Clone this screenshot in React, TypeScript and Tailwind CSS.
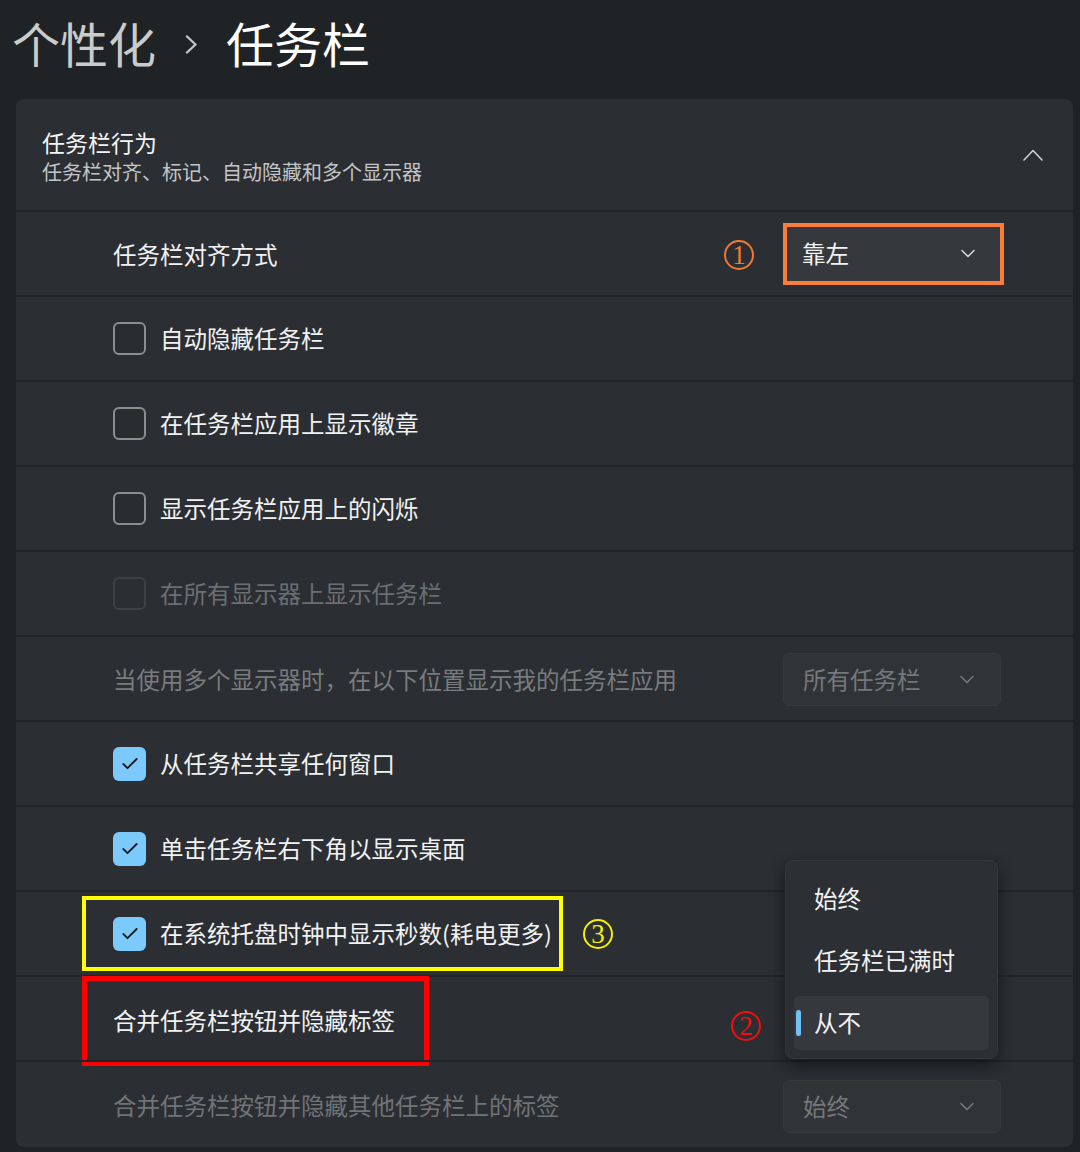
import { Check } from 'lucide-react'

type CheckState = 'off' | 'on' | 'disabled'

function Chevron({ className = '' }: { className?: string }) {
  return (
    <svg width="14" height="9" viewBox="0 0 14 9" className={className} fill="none">
      <polyline points="1,1.5 7,7.5 13,1.5" stroke="currentColor" strokeWidth="1.6" strokeLinecap="round" strokeLinejoin="round" />
    </svg>
  )
}

// circled annotation number, thin serif look
function Mark({ n, className }: { n: string; className: string }) {
  return (
    <span
      className={`flex h-[30px] w-[30px] shrink-0 items-center justify-center rounded-full border-2 border-current font-['Liberation_Serif',serif] text-[27px] leading-none ${className}`}
    >
      <span className="mt-[2px]">{n}</span>
    </span>
  )
}

function Checkbox({ state }: { state: CheckState }) {
  if (state === 'on') {
    return (
      <div className="flex h-[34px] w-[33px] shrink-0 items-center justify-center rounded-[6px] bg-[#7ccafc]">
        <Check className="h-[20px] w-[20px] text-[#16191c]" strokeWidth={2.2} />
      </div>
    )
  }
  return (
    <div
      className={
        state === 'disabled'
          ? 'h-[33px] w-[33px] shrink-0 rounded-[6px] border-2 border-[#3f4245]'
          : 'h-[33px] w-[33px] shrink-0 rounded-[6px] border-2 border-[#8b8d90] bg-[#2a2d30]'
      }
    />
  )
}

function Select({ value, dim }: { value: string; dim?: boolean }) {
  return (
    <div className="flex h-[53px] w-[218px] items-center justify-between rounded-[6px] border border-[#373a3d] bg-[#313437] pl-[19px] pr-[26px]">
      <span className={dim ? 'text-[#75787b]' : 'text-[#f2f2f2]'}>{value}</span>
      <Chevron className={dim ? 'text-[#75787b]' : 'text-[#d6d6d6]'} />
    </div>
  )
}

function Row({ children, last }: { children: React.ReactNode; last?: boolean }) {
  return (
    <div className={`relative flex items-center border-t-2 border-[#222528] pl-[97px] pr-[72px] ${last ? 'h-[87px]' : 'h-[85px]'}`}>
      {children}
    </div>
  )
}

function CheckRow({ label, state }: { label: string; state: CheckState }) {
  return (
    <Row>
      <div className="flex items-center gap-[14px]">
        <Checkbox state={state} />
        <span className={state === 'disabled' ? 'text-[#6c6f72]' : 'text-[#f2f2f2]'}>{label}</span>
      </div>
    </Row>
  )
}

export default function App() {
  return (
    <div className="h-[1152px] w-[1080px] overflow-hidden bg-[#202326] font-['Noto_Sans_CJK_SC','Microsoft_YaHei',sans-serif] text-[23.5px] leading-none">
      <div className="flex h-[84px] items-center pl-[12px] text-[48px]">
        <span className="text-[#cbcbcb]">个性化</span>
        <svg width="13" height="19" viewBox="0 0 13 19" className="ml-[29px] mr-[28px] mt-[4px]" fill="none">
          <polyline points="2,1.5 10.5,9.5 2,17.5" stroke="#c4c4c4" strokeWidth="2.4" strokeLinecap="round" strokeLinejoin="round" />
        </svg>
        <span className="text-white">任务栏</span>
      </div>

      <div className="relative mx-[16px] mt-[15px] w-[1057px] rounded-[8px] bg-[#2b2e32]">
        {/* header */}
        <div className="flex h-[111px] items-center justify-between pl-[26px] pr-[30px]">
          <div className="flex flex-col pt-[4px]">
            <span className="text-[23px] leading-[29px] text-[#f4f4f4]">任务栏行为</span>
            <span className="text-[20px] leading-[29px] text-[#c4c5c6]">任务栏对齐、标记、自动隐藏和多个显示器</span>
          </div>
          <svg width="20" height="12" viewBox="0 0 20 12" fill="none">
            <polyline points="1,11 10,1.5 19,11" stroke="#d2d2d2" strokeWidth="1.6" strokeLinecap="round" strokeLinejoin="round" />
          </svg>
        </div>

        <div className="relative flex h-[85px] items-center border-t-2 border-[#222528] pl-[97px] pr-[69px]">
          <span className="mt-[2px] text-[#f2f2f2]">任务栏对齐方式</span>
          <Mark n="1" className="ml-auto mr-[29px] mt-[2px] text-[#f07a33]" />
          <div className="flex h-[62px] w-[221px] items-center justify-between border-4 border-[#fb7d3c] bg-[#35383c] pl-[15px] pr-[25px]">
            <span className="text-[#f2f2f2]">靠左</span>
            <Chevron className="text-[#d6d6d6]" />
          </div>
        </div>

        <CheckRow label="自动隐藏任务栏" state="off" />
        <CheckRow label="在任务栏应用上显示徽章" state="off" />
        <CheckRow label="显示任务栏应用上的闪烁" state="off" />
        <CheckRow label="在所有显示器上显示任务栏" state="disabled" />

        <Row>
          <span className="mt-[2px] text-[#797c7f]">当使用多个显示器时，在以下位置显示我的任务栏应用</span>
          <div className="ml-auto mt-[2px]">
            <Select value="所有任务栏" dim />
          </div>
        </Row>

        <CheckRow label="从任务栏共享任何窗口" state="on" />
        <CheckRow label="单击任务栏右下角以显示桌面" state="on" />

        <div className="flex h-[85px] items-center border-t-2 border-[#222528] pl-[66px]">
          <div className="flex h-[75px] items-center gap-[14px] border-4 border-[#ffff00] pl-[27px] pr-[7px]">
            <Checkbox state="on" />
            <span className="text-[#f2f2f2]">在系统托盘时钟中显示秒数(耗电更多)</span>
          </div>
          <Mark n="3" className="ml-[20px] text-[#f5f000]" />
        </div>

        <Row>
          <span className="mt-[4px] text-[#f2f2f2]">合并任务栏按钮并隐藏标签</span>
          <Mark n="2" className="ml-auto mr-[22px] mt-[14px] text-[#f01010]" />
          <div className="w-[218px]" />
          <div className="absolute left-[66px] top-[-1px] h-[90px] w-[347px] border-[5px] border-[#ff0000]" />
        </Row>

        <Row last>
          <span className="mt-[2px] text-[#717477]">合并任务栏按钮并隐藏其他任务栏上的标签</span>
          <div className="ml-auto mt-[4px]">
            <Select value="始终" dim />
          </div>
        </Row>

        {/* flyout */}
        <div className="absolute left-[769px] top-[761px] flex h-[199px] w-[213px] flex-col gap-[8px] rounded-[8px] border border-[#35383b] bg-[#2c2f33] px-[8px] pt-[11px] shadow-[0_6px_16px_rgba(0,0,0,0.45)]">
          <div className="flex h-[54px] items-center pl-[20px] text-[#f2f2f2]">始终</div>
          <div className="flex h-[54px] items-center pl-[20px] text-[#f2f2f2]">任务栏已满时</div>
          <div className="relative flex h-[54px] items-center rounded-[5px] bg-[#35383c] pl-[20px] text-[#f2f2f2]">
            <div className="absolute left-[2px] top-[14px] h-[26px] w-[5px] rounded-full bg-[#71c1f5]" />
            从不
          </div>
        </div>
      </div>
    </div>
  )
}
